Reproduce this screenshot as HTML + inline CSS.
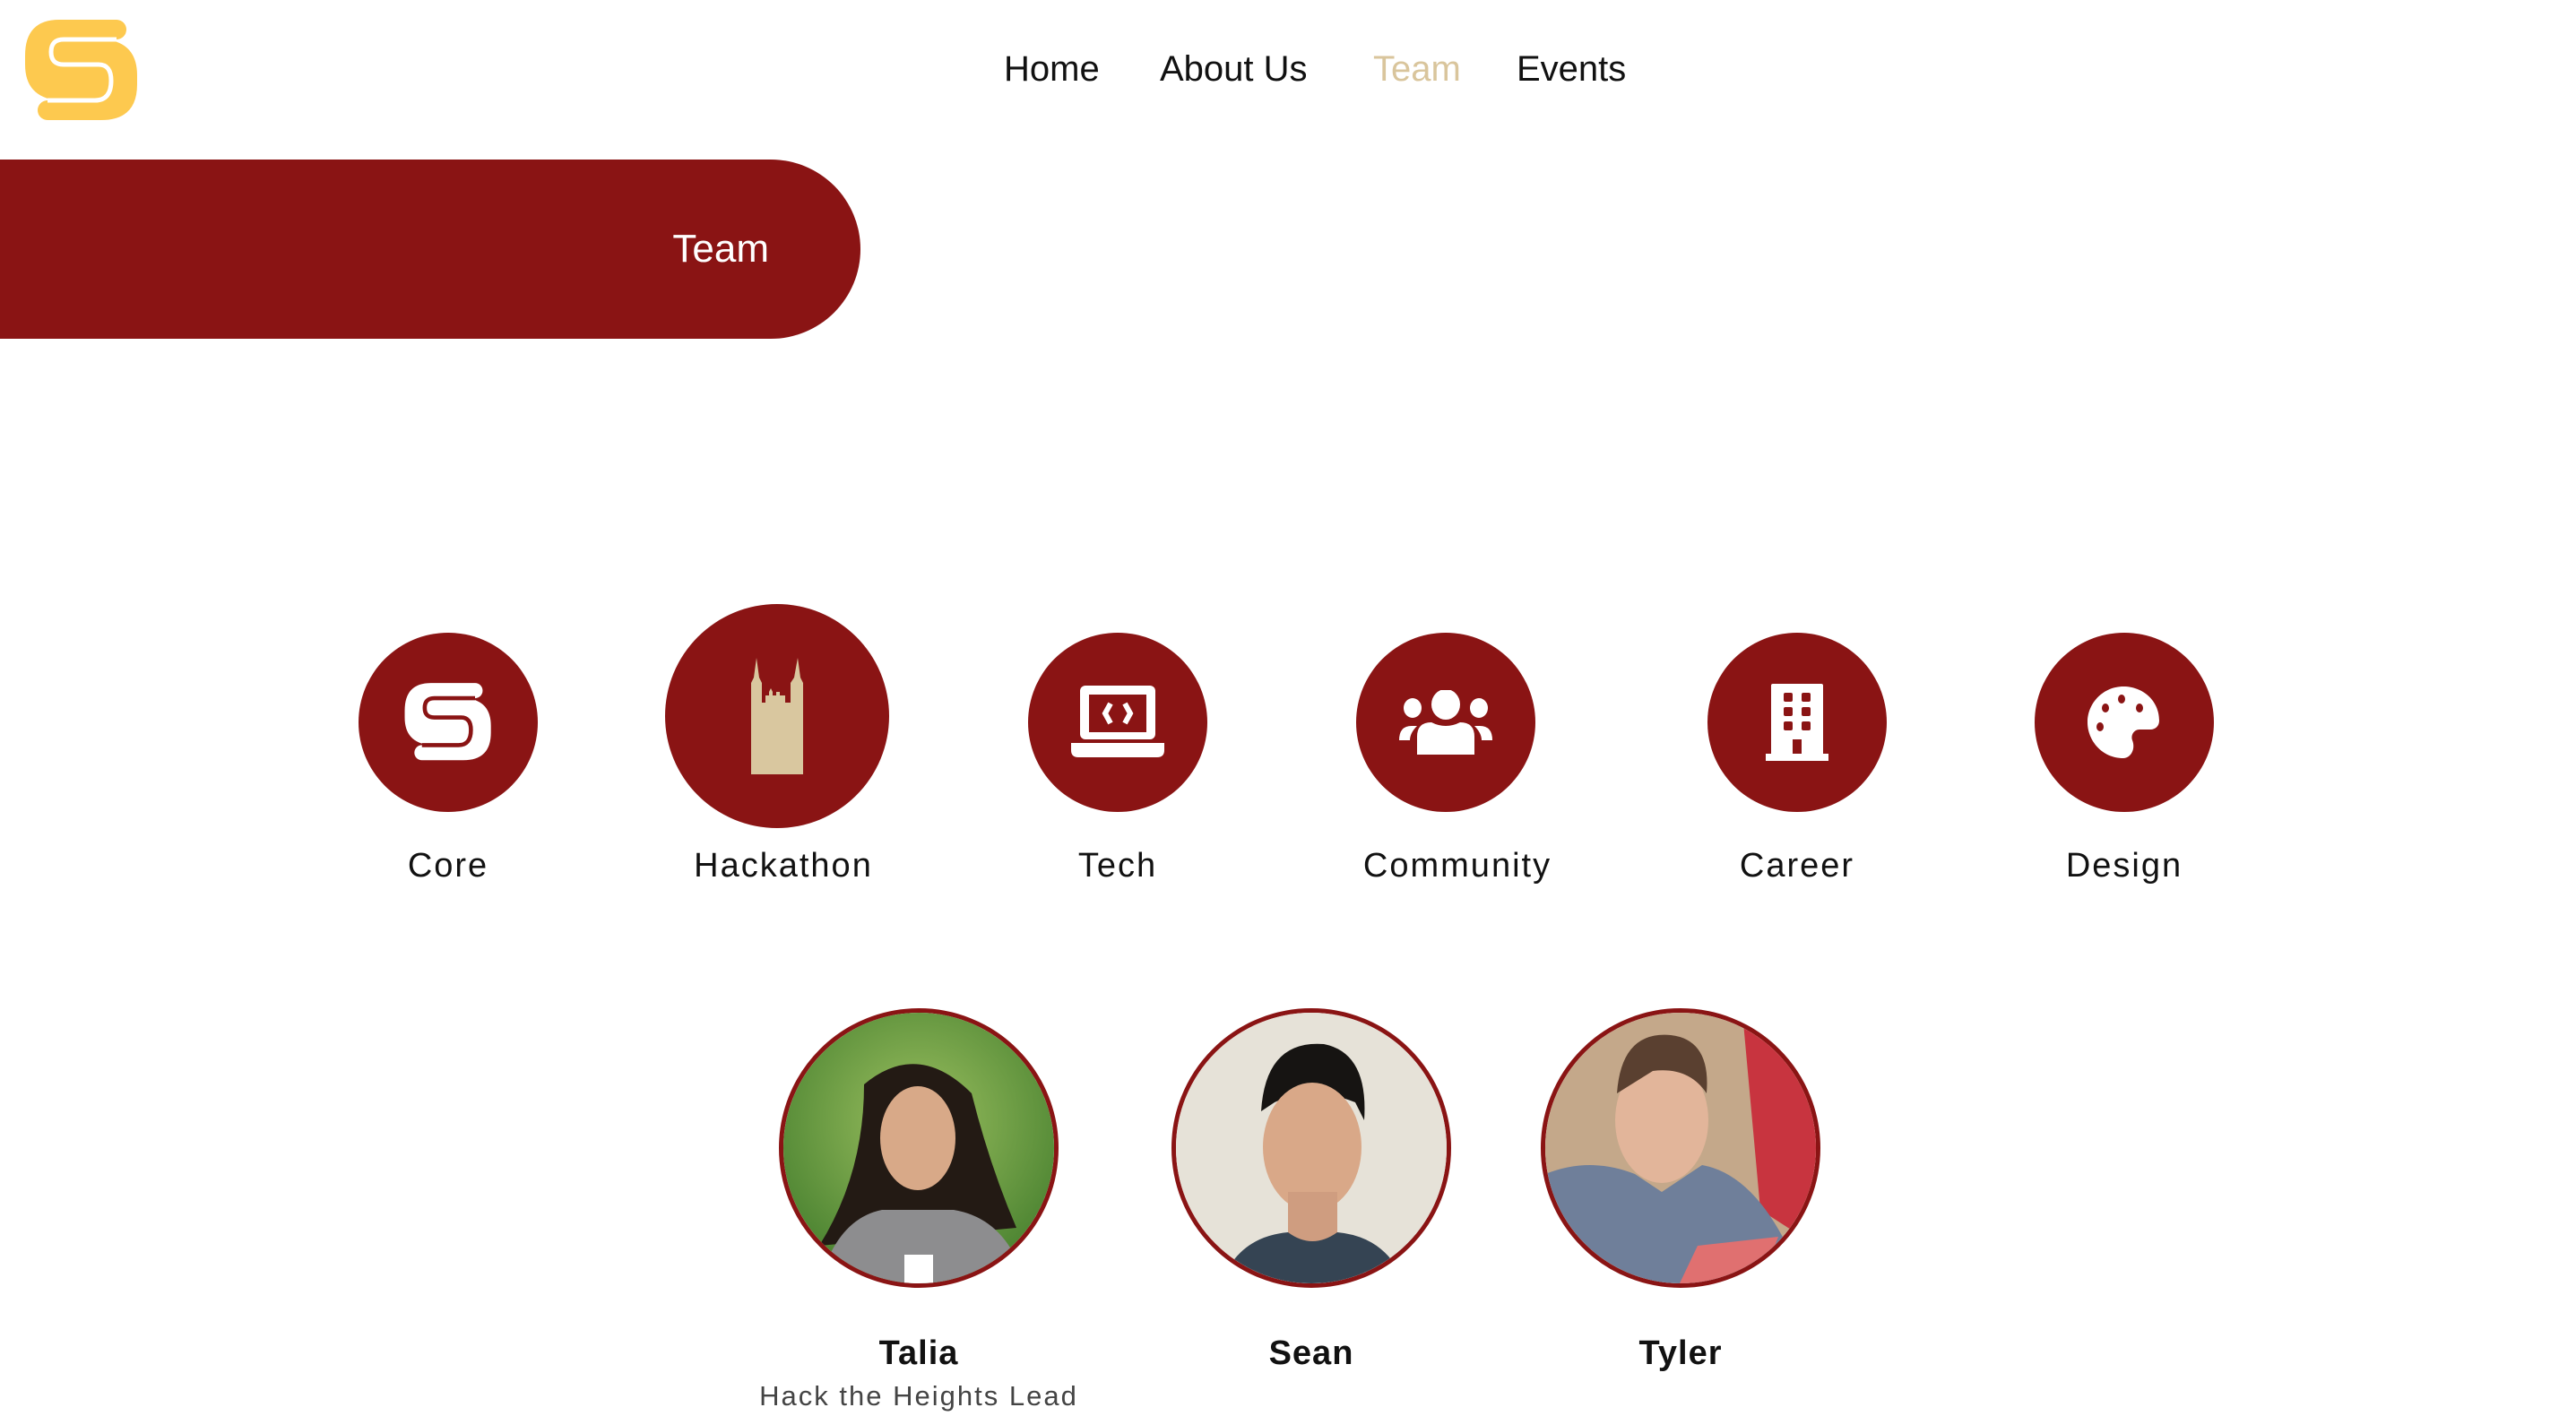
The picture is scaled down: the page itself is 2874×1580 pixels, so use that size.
<!DOCTYPE html>
<html><head><meta charset="utf-8"><style>
*{margin:0;padding:0;box-sizing:border-box}
body{width:2874px;height:1580px;background:#fff;position:relative;overflow:hidden;font-family:"Liberation Sans",sans-serif;color:#111}
.a{position:absolute}
.nav{top:52px;font-size:40px;line-height:50px}
.pill{left:0;top:178px;width:960px;height:200px;background:#8a1414;border-radius:0 100px 100px 0}
.pill span{position:absolute;right:102px;top:72px;color:#fff;font-size:44px;line-height:56px}
.c{border-radius:50%;background:#8a1414;display:flex;align-items:center;justify-content:center}
.lab{top:942px;font-size:38px;letter-spacing:2px;width:400px;text-align:center;line-height:48px}
.ph{border-radius:50%;border:5px solid #8a1414;overflow:hidden;width:312px;height:312px;top:1125px}
.nm{top:1486px;font-size:38px;font-weight:bold;letter-spacing:1px;width:400px;text-align:center;line-height:48px}
</style></head><body>
<svg class="a" style="left:26px;top:22px" width="130" height="114" viewBox="0 0 130 114">
<path d="M40 0 H104 A11 11 0 0 1 104 22 H92 Q127 26 127 62 V72 Q127 112 87 112 H27 A11 11 0 0 1 27 90 H38 Q2 86 2 50 V40 Q2 0 40 0Z" fill="#fdc94f"/>
<path d="M104 22 H45 Q31 22 31 36 Q31 50 45 50 H84 Q98 50 98 68 Q98 90 80 90 H27" fill="none" stroke="#fff" stroke-width="5"/>
</svg>
<div class="a nav" style="left:1120px">Home</div>
<div class="a nav" style="left:1294px">About Us</div>
<div class="a nav" style="left:1532px;color:#d9c59c">Team</div>
<div class="a nav" style="left:1692px">Events</div>
<div class="a pill"><span>Team</span></div>

<div class="a c" style="left:400px;top:706px;width:200px;height:200px">
<svg width="100" height="94" viewBox="0 0 130 114"><path d="M40 0 H104 A11 11 0 0 1 104 22 H92 Q127 26 127 62 V72 Q127 112 87 112 H27 A11 11 0 0 1 27 90 H38 Q2 86 2 50 V40 Q2 0 40 0Z" fill="#fff"/><path d="M104 22 H45 Q31 22 31 36 Q31 50 45 50 H84 Q98 50 98 68 Q98 90 80 90 H27" fill="none" stroke="#8a1414" stroke-width="6"/></svg></div>
<div class="a c" style="left:742px;top:674px;width:250px;height:250px">
<svg width="62" height="130" viewBox="0 0 62 130"><path d="M2 130 V28 L5 22 L8 0 L11 22 L14 28 V50 H18 V42 H22 V38 L24 34 L26 38 V42 H30 V38 H34 V42 H40 V50 H46 V28 L50 22 L54 0 L57 22 L60 28 V130Z" fill="#d9c79f"/></svg></div>
<div class="a c" style="left:1147px;top:706px;width:200px;height:200px">
<svg width="104" height="82" viewBox="0 0 104 82"><rect x="10" y="0" width="84" height="60" rx="6" fill="#fff"/><rect x="20" y="10" width="64" height="42" fill="#8a1414"/><path d="M44 20 L38 31 L44 42 M60 20 L66 31 L60 42" stroke="#fff" stroke-width="6" fill="none"/><path d="M0 64 H104 V72 Q104 80 96 80 H8 Q0 80 0 72Z" fill="#fff"/></svg></div>
<div class="a c" style="left:1513px;top:706px;width:200px;height:200px">
<svg width="104" height="72" viewBox="0 0 104 72"><ellipse cx="52" cy="16" rx="16" ry="17" fill="#fff"/><ellipse cx="15" cy="20" rx="10" ry="11" fill="#fff"/><ellipse cx="89" cy="20" rx="10" ry="11" fill="#fff"/><path d="M20 72 V52 Q20 36 36 36 Q52 44 68 36 Q84 36 84 52 V72Z" fill="#fff"/><path d="M0 56 Q0 40 14 40 H20 Q12 48 12 56Z M104 56 Q104 40 90 40 H84 Q92 48 92 56Z" fill="#fff"/></svg></div>
<div class="a c" style="left:1905px;top:706px;width:200px;height:200px">
<svg width="70" height="86" viewBox="0 0 70 86"><rect x="6" y="0" width="58" height="80" rx="2" fill="#fff"/><rect x="0" y="78" width="70" height="8" fill="#fff"/><g fill="#8a1414"><rect x="20" y="10" width="10" height="10" rx="2"/><rect x="40" y="10" width="10" height="10" rx="2"/><rect x="20" y="26" width="10" height="10" rx="2"/><rect x="40" y="26" width="10" height="10" rx="2"/><rect x="20" y="42" width="10" height="10" rx="2"/><rect x="40" y="42" width="10" height="10" rx="2"/><rect x="30" y="62" width="10" height="16"/></g></svg></div>
<div class="a c" style="left:2270px;top:706px;width:200px;height:200px">
<svg width="82" height="80" viewBox="0 0 82 80"><path d="M40 0 C62 0 80 16 80 38 C80 44 76 48 70 48 H58 C52 48 48 54 50 60 C54 70 48 80 40 80 C16 80 0 60 0 40 C0 18 18 0 40 0Z" fill="#fff"/><g fill="#8a1414"><ellipse cx="38" cy="14" rx="4" ry="5"/><ellipse cx="20" cy="24" rx="4" ry="5"/><ellipse cx="58" cy="24" rx="4" ry="5"/><ellipse cx="14" cy="45" rx="4" ry="5"/></g></svg></div>

<div class="a lab" style="left:300px">Core</div>
<div class="a lab" style="left:674px">Hackathon</div>
<div class="a lab" style="left:1047px">Tech</div>
<div class="a lab" style="left:1426px">Community</div>
<div class="a lab" style="left:1805px">Career</div>
<div class="a lab" style="left:2170px">Design</div>

<div class="a ph" style="left:869px"><svg width="302" height="302" viewBox="0 0 302 302"><defs><radialGradient id="g1" cx="50%" cy="40%" r="70%"><stop offset="0" stop-color="#9cc060"/><stop offset="1" stop-color="#3f7a2a"/></radialGradient></defs><rect width="302" height="302" fill="url(#g1)"/><path d="M90 80 Q150 30 210 90 Q230 170 260 240 L40 260 Q90 180 90 80Z" fill="#231a14"/><ellipse cx="150" cy="140" rx="42" ry="58" fill="#d8a988"/><path d="M40 302 Q60 230 110 220 L190 220 Q250 230 270 302Z" fill="#8d8d8f"/><rect x="135" y="270" width="32" height="32" fill="#fff"/></svg></div>
<div class="a ph" style="left:1307px"><svg width="302" height="302" viewBox="0 0 302 302"><rect width="302" height="302" fill="#e6e2d8"/><path d="M95 110 Q100 30 165 35 Q215 45 210 120 L200 100 Q150 80 110 100Z" fill="#161412"/><ellipse cx="152" cy="150" rx="55" ry="72" fill="#d9a888"/><rect x="125" y="200" width="55" height="60" fill="#cf9d80"/><path d="M50 302 Q70 250 125 245 Q152 265 180 245 Q235 250 255 302Z" fill="#354453"/></svg></div>
<div class="a ph" style="left:1719px"><svg width="302" height="302" viewBox="0 0 302 302"><rect width="302" height="302" fill="#c4a88a"/><path d="M220 0 H302 V260 L240 220Z" fill="#c8343f"/><ellipse cx="130" cy="120" rx="52" ry="70" fill="#e2b59a"/><path d="M80 90 Q85 20 140 25 Q185 30 180 90 Q160 60 120 65Z" fill="#5a4030"/><path d="M0 302 V180 Q50 160 100 180 L130 200 L175 170 Q230 180 270 260 L240 302Z" fill="#6f7f9a"/><path d="M150 302 L170 260 L260 250 L240 302Z" fill="#e07070"/></svg></div>

<div class="a nm" style="left:825px">Talia</div>
<div class="a nm" style="left:1263px">Sean</div>
<div class="a nm" style="left:1675px">Tyler</div>
<div class="a" style="left:775px;top:1538px;width:500px;text-align:center;font-size:31px;letter-spacing:2px;color:#444;line-height:40px">Hack the Heights Lead</div>
</body></html>
